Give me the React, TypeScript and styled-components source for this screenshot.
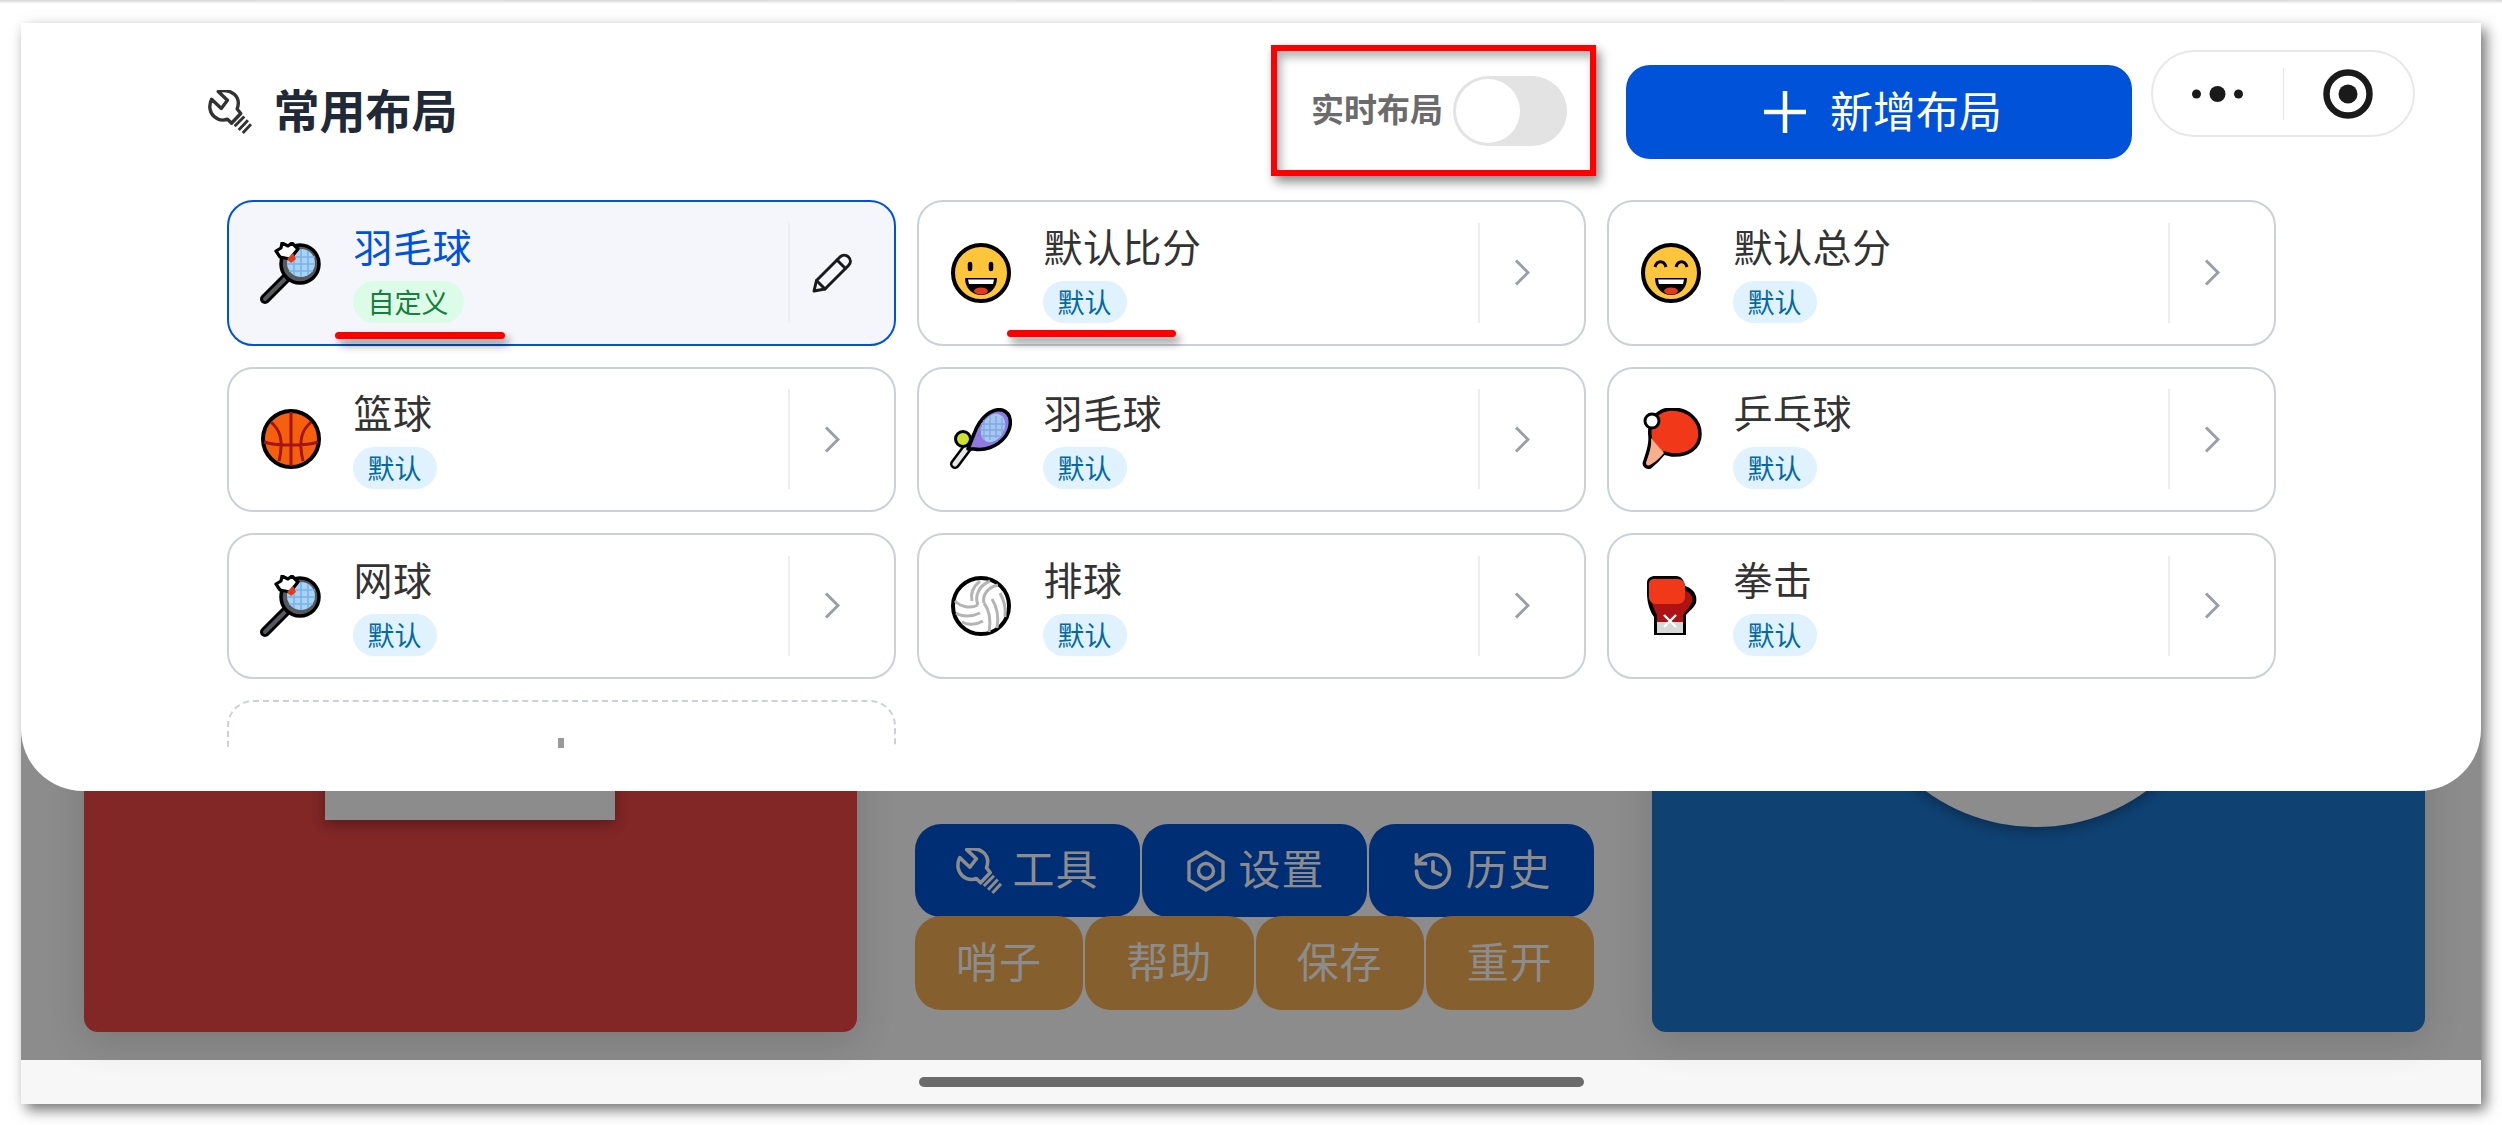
import React from 'react';
import styled, { createGlobalStyle } from 'styled-components';
import { History } from 'lucide-react';

const GlobalStyle = createGlobalStyle`
  html, body {
    margin: 0;
    padding: 0;
    background: #fff;
    font-family: "Noto Sans CJK SC", "Noto Sans", sans-serif;
  }
`;

const Canvas = styled.div`
  position: relative;
  width: 2502px;
  height: 1125px;
  padding: 23px 21px 21px;
  box-sizing: border-box;
  overflow: hidden;
  background: linear-gradient(#d8d8d8 0, #fff 4px);
`;

const Phone = styled.div`
  position: relative;
  height: 1081px;
  display: flex;
  flex-direction: column;
  background: #8c8c8c;
  box-shadow: 5px 6px 13px rgba(0, 0, 0, 0.55);
`;

const Stage = styled.div`
  flex: 1;
  display: flex;
  align-items: flex-end;
  justify-content: space-between;
  padding: 0 56px 28px 63px;
`;

const TeamCard = styled.div<{ $color: string }>`
  position: relative;
  width: 773px;
  height: 500px;
  border-radius: 14px;
  background: ${(p) => p.$color};
  box-shadow: 0 8px 40px rgba(0, 0, 0, 0.14);
  overflow: hidden;
`;

const ScoreNotch = styled.div`
  position: absolute;
  left: 241px;
  top: 0;
  width: 290px;
  height: 288px;
  background: #8c8c8c;
  box-shadow: 0 4px 12px rgba(0, 0, 0, 0.3);
`;

const ScoreDisc = styled.div`
  position: absolute;
  left: 197px;
  top: -79px;
  width: 374px;
  height: 374px;
  border-radius: 50%;
  background: #8c8c8c;
  box-shadow: 0 4px 12px rgba(0, 0, 0, 0.3);
`;

const Controls = styled.div`
  display: flex;
  flex-direction: column;
  width: 679px;
  margin-bottom: 22px;
`;

const ControlRow = styled.div<{ $lower?: boolean }>`
  display: flex;
  gap: 2px;
  height: ${(p) => (p.$lower ? 94 : 93)}px;
  margin-top: ${(p) => (p.$lower ? -1 : 0)}px;
`;

const ControlButton = styled.div<{ $color: string }>`
  flex: 1;
  display: flex;
  align-items: center;
  justify-content: center;
  gap: 10px;
  border-radius: 26px;
  background: ${(p) => p.$color};
  color: #8c8c8c;
  font-size: 42px;
  letter-spacing: 1px;
`;

const ControlLabel = styled.span`
  padding-bottom: 8px;
`;

const HomeBar = styled.div`
  height: 44px;
  flex: none;
  display: flex;
  align-items: center;
  justify-content: center;
  background: #f7f7f7;
`;

const HomeHandle = styled.div`
  width: 665px;
  height: 10px;
  margin-top: -1px;
  border-radius: 5px;
  background: #6b6b6b;
`;

const Sheet = styled.div`
  position: absolute;
  left: 0;
  right: 0;
  top: 0;
  height: 768px;
  box-sizing: border-box;
  padding: 0 0 0 205.5px;
  background: #fff;
  border-radius: 0 0 62px 62px;
`;

const SheetHeader = styled.div`
  height: 177px;
  display: flex;
  align-items: flex-start;
`;

const TitleGroup = styled.div`
  display: flex;
  align-items: center;
  gap: 22px;
  height: 94px;
  margin: 42px auto 0 -19px;
`;

const SheetTitle = styled.h1`
  margin: 0 0 8px;
  font-size: 46px;
  line-height: 60px;
  font-weight: 700;
  color: #1f2937;
`;

const LiveToggleBox = styled.div`
  display: flex;
  align-items: center;
  gap: 10px;
  width: 325px;
  height: 131px;
  box-sizing: border-box;
  margin-top: 22px;
  padding-left: 34px;
  border: 6px solid #ff0000;
  box-shadow: 4px 6px 10px rgba(0, 0, 0, 0.45), inset 4px 6px 10px rgba(0, 0, 0, 0.3);
`;

const LiveLabel = styled.span`
  padding-bottom: 5px;
  font-size: 33px;
  font-weight: 700;
  color: #6b6b6b;
`;

const Toggle = styled.div`
  width: 114px;
  height: 70px;
  flex: none;
  box-sizing: border-box;
  padding: 3px;
  border-radius: 35px;
  background: #e3e3e3;
`;

const ToggleKnob = styled.div`
  width: 64px;
  height: 64px;
  border-radius: 50%;
  background: #fff;
`;

const AddButton = styled.div`
  width: 506px;
  height: 94px;
  display: flex;
  align-items: center;
  justify-content: center;
  gap: 24px;
  box-sizing: border-box;
  padding-left: 8px;
  margin: 42px 19px 0 30px;
  border-radius: 24px;
  background: #0052d9;
  color: #fff;
  font-size: 43px;
`;

const AddLabel = styled.span`
  padding-bottom: 6px;
`;

const CapsuleMenu = styled.div`
  width: 264px;
  height: 87px;
  display: flex;
  align-items: center;
  box-sizing: border-box;
  margin: 27px 66px 0 0;
  border: 2px solid #e8e8e8;
  border-radius: 44px;
  background: #fff;
  flex: none;
`;

const CapsuleSide = styled.div`
  flex: 1;
  display: flex;
  align-items: center;
  justify-content: center;
`;

const CapsuleDivider = styled.div`
  width: 1px;
  height: 52px;
  background: #e5e5e5;
`;

const CardClip = styled.div`
  height: 548px;
  overflow: hidden;
`;

const CardGrid = styled.div`
  display: grid;
  grid-template-columns: repeat(3, 669.5px);
  column-gap: 20.5px;
  row-gap: 21px;
  grid-auto-rows: 145.5px;
`;

const LayoutCard = styled.div<{ $active?: boolean }>`
  display: flex;
  align-items: center;
  box-sizing: border-box;
  padding: 0 20px 0 31px;
  border: 2px solid ${(p) => (p.$active ? '#0052d9' : '#ccd0d7')};
  border-radius: 26px;
  background: ${(p) => (p.$active ? '#f4f6fb' : '#fff')};
`;

const EmojiSlot = styled.div`
  width: 62px;
  height: 62px;
  flex: none;
  margin-right: 32px;
`;

const CardText = styled.div`
  flex: 1;
  display: flex;
  flex-direction: column;
  align-items: flex-start;
  height: 100px;
`;

const CardTitle = styled.div<{ $active?: boolean }>`
  height: 58px;
  font-size: 39px;
  line-height: 44px;
  letter-spacing: 0.5px;
  color: ${(p) => (p.$active ? '#0052d9' : '#333')};
`;

const Tag = styled.div<{ $custom?: boolean }>`
  height: 42px;
  margin-left: -1px;
  padding: 0 15px;
  border-radius: 21px;
  font-size: 27px;
  line-height: 42px;
  background: ${(p) => (p.$custom ? '#dcfce7' : '#e0f2fe')};
  color: ${(p) => (p.$custom ? '#15803d' : '#0369a1')};
`;

const CardAction = styled.div`
  width: 84px;
  height: 100px;
  flex: none;
  display: flex;
  align-items: center;
  justify-content: center;
  border-left: 2px solid #eceef1;
`;

const AddCard = styled.div`
  height: 145px;
  display: flex;
  justify-content: center;
  box-sizing: border-box;
  padding-top: 36px;
  border: 2px dashed #ccd0d7;
  border-radius: 26px;
`;

const AddCardPlus = styled.div`
  width: 6px;
  height: 40px;
  background: #9a9a9a;
`;

const RedStroke = styled.div<{ $left: number; $top: number; $width: number }>`
  position: absolute;
  left: ${(p) => p.$left}px;
  top: ${(p) => p.$top}px;
  width: ${(p) => p.$width}px;
  height: 7px;
  border-radius: 4px;
  background: #ff0000;
  box-shadow: 4px 6px 8px rgba(0, 0, 0, 0.45);
`;

const WrenchIcon = ({ size, color }: { size: number; color: string }) => (
  <svg width={size} height={size} viewBox="7 5 43 43" fill="none" stroke={color} strokeWidth="3.3" strokeLinejoin="round">
    <path d="M17 6.5 L26 15 L20 23 L10.5 14 C7.5 20 8.5 27 13 31 C17 34.5 22 35 26 33.5 L30 37.5 L39 28 L35.5 23.5 C37.5 18 36.5 12.5 32.5 9 C28 5.5 22 5 17 6.5 Z" />
    <path d="M33 40.5 L42.5 31 M37 44 L46 34.5 M41 47 L49 38.5" strokeWidth="2.8" />
  </svg>
);

const HexNutIcon = ({ size, color }: { size: number; color: string }) => (
  <svg width={size} height={size} viewBox="0 0 44 44" fill="none" stroke={color} strokeWidth="3.4" strokeLinejoin="round">
    <path d="M22 3 L39 13 V31 L22 41 L5 31 V13 Z" />
    <circle cx="22" cy="22" r="7.5" />
  </svg>
);

const PlusIcon = () => (
  <svg width="42" height="42" viewBox="0 0 42 42" stroke="#fff" strokeWidth="4.5">
    <path d="M0 21 H42 M21 0 V42" />
  </svg>
);

const DotsIcon = () => (
  <svg width="51" height="18" viewBox="0 0 51 18" fill="#1a1a1a">
    <circle cx="4.5" cy="9" r="4.5" />
    <circle cx="25.5" cy="9" r="8" />
    <circle cx="46.5" cy="9" r="4.5" />
  </svg>
);

const TargetIcon = () => (
  <svg width="50" height="50" viewBox="0 0 50 50">
    <circle cx="25" cy="25" r="21.5" fill="none" stroke="#1a1a1a" strokeWidth="6.5" />
    <circle cx="25" cy="25" r="9.5" fill="#1a1a1a" />
  </svg>
);

const Chevron = () => (
  <svg width="16" height="27" viewBox="0 0 16 27" fill="none" stroke="#9a9ea5" strokeWidth="3">
    <path d="M2 1.5 L14 13.5 L2 25.5" />
  </svg>
);

const Pencil = () => (
  <svg width="42" height="42" viewBox="0 0 42 42" fill="none" stroke="#1a1a1a" strokeWidth="3" strokeLinejoin="round" strokeLinecap="round">
    <path d="M3 39 L5.5 28.5 L29 5 C31.5 2.5 35 2.5 37.5 5 C40 7.5 40 11 37.5 13.5 L14 37 Z" />
    <path d="M26 8 L34.5 16.5 M5.5 28.5 L14 37" />
  </svg>
);

const RacketBadminton = () => (
  <svg viewBox="0 0 62 62" width="62" height="62">
    <path d="M5 57 L26 36" stroke="#000" strokeWidth="10" strokeLinecap="round" />
    <path d="M5 57 L26 36" stroke="#55585c" strokeWidth="4" strokeLinecap="round" />
    <circle cx="40" cy="22" r="19" fill="#55585c" stroke="#000" strokeWidth="3.5" />
    <circle cx="41" cy="21" r="14" fill="#a8d3f5" />
    <path d="M34 9 V33 M41 7 V35 M48 9 V33 M28 15 H55 M27 22 H55 M29 29 H53" stroke="#79b3e6" strokeWidth="1.6" />
    <path d="M30 17 L20 15 L16 9 L21 6 L22 1 L28 4 L32 1 L38 7 Z" fill="#fff" stroke="#000" strokeWidth="3.2" strokeLinejoin="round" />
    <path d="M27 17 L33 11 L36 17 L31 21 Z" fill="#e23a1b" />
  </svg>
);

const Face = ({ laugh }: { laugh?: boolean }) => (
  <svg viewBox="0 0 62 62" width="62" height="62">
    <circle cx="31" cy="31" r="28" fill="#fcc53c" stroke="#000" strokeWidth="4" />
    {laugh ? (
      <path d="M15 25 C17 18 24 18 26 25 M36 25 C38 18 45 18 47 25" fill="none" stroke="#000" strokeWidth="3" />
    ) : (
      <path d="M20 22 V27 M41 22 V27" stroke="#000" strokeWidth="4.5" strokeLinecap="round" />
    )}
    <path d="M15 36 H47 C47 46 40 53 31 53 C22 53 15 46 15 36 Z" fill="#000" />
    <path d="M18 37.5 H44 L43 42 H19 Z" fill="#fff" />
    <ellipse cx="31" cy="49" rx="7" ry="3.5" fill="#e23a1b" />
  </svg>
);

const Basketball = () => (
  <svg viewBox="0 0 62 62" width="62" height="62">
    <circle cx="31" cy="31" r="28" fill="#f4600e" stroke="#000" strokeWidth="4" />
    <path d="M31 4 V58 M4 34 C14 38 48 38 58 34 M11 14 C20 22 24 32 19 53 M51 14 C42 22 38 32 43 53" fill="none" stroke="#a51410" strokeWidth="3" />
  </svg>
);

const RacketTennis = () => (
  <svg viewBox="0 0 62 62" width="62" height="62">
    <path d="M5 56 L20 36" stroke="#000" strokeWidth="10" strokeLinecap="round" />
    <path d="M5 56 L20 36" stroke="#e6e6e6" strokeWidth="5" strokeLinecap="round" />
    <path d="M18 41 L24 26 C30 9 42 0 52 2 C62 5 63 18 55 29 C47 39 34 43 24 41 Z" fill="#8f79e0" stroke="#000" strokeWidth="3.5" strokeLinejoin="round" />
    <ellipse cx="43" cy="20" rx="11" ry="15" transform="rotate(30 43 20)" fill="#a5c8f0" />
    <path d="M34 12 V32 M40 8 V32 M46 8 V30 M52 10 V26 M31 16 H56 M30 22 H55 M31 28 H50" stroke="#84a8e0" strokeWidth="1.4" />
    <circle cx="13" cy="31" r="7.5" fill="#cfe12f" stroke="#000" strokeWidth="3" />
  </svg>
);

const Paddle = () => (
  <svg viewBox="0 0 62 62" width="62" height="62">
    <path d="M10 28 C8 12 18 1 32 1 C48 1 60 12 60 26 C60 40 48 48 32 47 L24 45 C20 50 14 56 10 59 C6 60 3 57 5 53 C7 46 11 38 10 28 Z" fill="#f1391a" stroke="#000" strokeWidth="3.5" strokeLinejoin="round" />
    <path d="M11 30 L24 45 C20 50 14 55 10 57 C7 58 5 56 7 52 C9 46 12 38 11 30 Z" fill="#f6b08e" />
    <circle cx="12" cy="13" r="7" fill="#fff" stroke="#000" strokeWidth="3" />
  </svg>
);

const Volleyball = () => (
  <svg viewBox="0 0 62 62" width="62" height="62">
    <circle cx="31" cy="31" r="28" fill="#fff" stroke="#000" strokeWidth="4" />
    <path
      d="M22 26 C20 18 24 11 30 6 M28 30 C24 20 30 10 40 6 M34 28 C32 20 38 12 48 10 M28 30 C20 34 11 32 5 26 M30 38 C22 42 12 42 6 38 M33 46 C26 50 18 50 12 47 M34 28 C40 36 41 46 39 57 M42 24 C47 32 49 42 47 53 M50 18 C54 26 56 32 55 42"
      fill="none"
      stroke="#b4b4b4"
      strokeWidth="3"
    />
  </svg>
);

const BoxingGlove = () => (
  <svg viewBox="0 0 62 62" width="62" height="62">
    <path d="M7 8 C7 3 11 1 15 1 H36 C41 1 44 5 45 11 C53 13 58 20 56 28 C54 33 49 36 46 40 V60 H14 V42 C10 36 7 28 7 18 Z" fill="#000" />
    <path d="M42 15 C50 16 54 22 52 27 C50 32 46 36 43 40 V47 H17 V40 C15 36 13 32 12 28 Z" fill="#ad1214" />
    <path d="M14 4 H38 C42 4 45 7 45 12 V22 C45 26 42 29 38 29 H16 C12 29 9 26 9 22 V9 C9 6 11 4 14 4 Z" fill="#f1391a" />
    <rect x="17" y="47" width="26" height="11" fill="#d8d8d8" />
    <path d="M24 40 L36 52 M36 40 L24 52" stroke="#fff" strokeWidth="2.4" />
  </svg>
);

const cards = [
  { name: '羽毛球', tag: '自定义', icon: <RacketBadminton />, active: true },
  { name: '默认比分', tag: '默认', icon: <Face /> },
  { name: '默认总分', tag: '默认', icon: <Face laugh /> },
  { name: '篮球', tag: '默认', icon: <Basketball /> },
  { name: '羽毛球', tag: '默认', icon: <RacketTennis /> },
  { name: '乒乓球', tag: '默认', icon: <Paddle /> },
  { name: '网球', tag: '默认', icon: <RacketBadminton /> },
  { name: '排球', tag: '默认', icon: <Volleyball /> },
  { name: '拳击', tag: '默认', icon: <BoxingGlove /> },
];

export default function App() {
  return (
    <>
      <GlobalStyle />
      <Canvas>
        <Phone>
          <Stage>
            <TeamCard $color="#822626">
              <ScoreNotch />
            </TeamCard>
            <Controls>
              <ControlRow>
                <ControlButton $color="#002e75">
                  <WrenchIcon size={46} color="#8c8c8c" />
                  <ControlLabel>工具</ControlLabel>
                </ControlButton>
                <ControlButton $color="#002e75">
                  <HexNutIcon size={44} color="#8c8c8c" />
                  <ControlLabel>设置</ControlLabel>
                </ControlButton>
                <ControlButton $color="#002e75">
                  <History size={44} color="#8c8c8c" strokeWidth={2} />
                  <ControlLabel>历史</ControlLabel>
                </ControlButton>
              </ControlRow>
              <ControlRow $lower>
                <ControlButton $color="#85602e"><ControlLabel>哨子</ControlLabel></ControlButton>
                <ControlButton $color="#85602e"><ControlLabel>帮助</ControlLabel></ControlButton>
                <ControlButton $color="#85602e"><ControlLabel>保存</ControlLabel></ControlButton>
                <ControlButton $color="#85602e"><ControlLabel>重开</ControlLabel></ControlButton>
              </ControlRow>
            </Controls>
            <TeamCard $color="#0f4172">
              <ScoreDisc />
            </TeamCard>
          </Stage>
          <HomeBar>
            <HomeHandle />
          </HomeBar>
          <Sheet>
            <SheetHeader>
              <TitleGroup>
                <WrenchIcon size={44} color="#333" />
                <SheetTitle>常用布局</SheetTitle>
              </TitleGroup>
              <LiveToggleBox>
                <LiveLabel>实时布局</LiveLabel>
                <Toggle>
                  <ToggleKnob />
                </Toggle>
              </LiveToggleBox>
              <AddButton>
                <PlusIcon />
                <AddLabel>新增布局</AddLabel>
              </AddButton>
              <CapsuleMenu>
                <CapsuleSide>
                  <DotsIcon />
                </CapsuleSide>
                <CapsuleDivider />
                <CapsuleSide>
                  <TargetIcon />
                </CapsuleSide>
              </CapsuleMenu>
            </SheetHeader>
            <CardClip>
              <CardGrid>
                {cards.map((card, i) => (
                  <LayoutCard key={i} $active={card.active}>
                    <EmojiSlot>{card.icon}</EmojiSlot>
                    <CardText>
                      <CardTitle $active={card.active}>{card.name}</CardTitle>
                      <Tag $custom={card.active}>{card.tag}</Tag>
                    </CardText>
                    <CardAction>{card.active ? <Pencil /> : <Chevron />}</CardAction>
                  </LayoutCard>
                ))}
                <AddCard>
                  <AddCardPlus />
                </AddCard>
              </CardGrid>
            </CardClip>
            <RedStroke $left={314} $top={309} $width={170} />
            <RedStroke $left={986} $top={307} $width={169} />
          </Sheet>
        </Phone>
      </Canvas>
    </>
  );
}
